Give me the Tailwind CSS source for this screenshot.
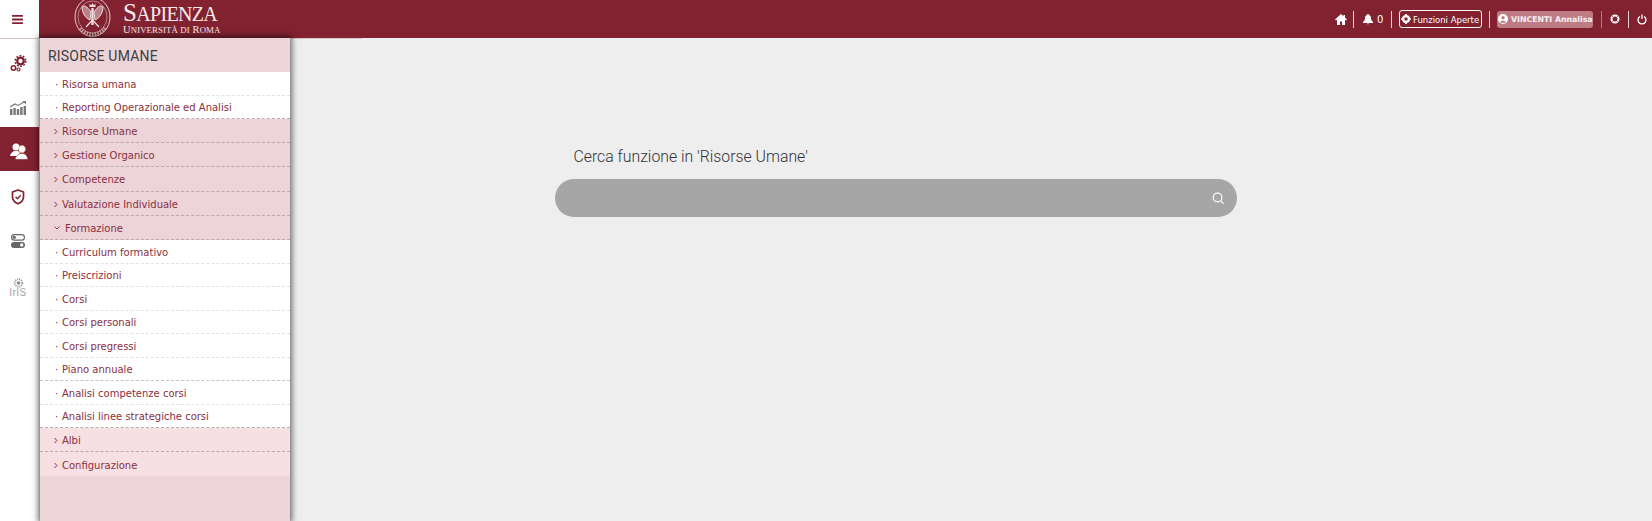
<!DOCTYPE html>
<html><head><meta charset="utf-8"><script src="https://cdn.jsdelivr.net/npm/@tailwindcss/browser@4"></script></head>
<body class="m-0 h-[521px] w-[1652px] overflow-hidden bg-[#eeeeee] font-['DejaVu_Sans',sans-serif]">
<header class="flex h-[38px] w-full bg-[#822231] text-white">
  <div class="flex h-[38px] w-[39px] items-center justify-center bg-white pr-[4px]">
    <svg width="11" height="9" viewBox="0 0 11 9" fill="#822231"><rect y="0" width="11" height="1.800" rx="0.500"/><rect y="3.600" width="11" height="1.800" rx="0.500"/><rect y="7.200" width="11" height="1.800" rx="0.500"/></svg>
  </div>
  <div class="ml-[35px] flex h-[38px] items-start">
    <svg class="mt-[-4px] shrink-0" width="37" height="42" viewBox="0 0 37 42" fill="none" stroke="#f1dfe1"><ellipse cx="18.500" cy="21" rx="17.500" ry="19.500" stroke-width="0.900"/><ellipse cx="18.500" cy="21" rx="14.500" ry="16" stroke-width="0.500"/><path d="M31 32a16 17 0 0 1-25 0" stroke-width="3.500" stroke-dasharray="1.500 1.200" opacity="0.700"/><path d="M18.500 12v17" stroke-width="2.400"/><path d="M17 16C13 10 10 9 8 11c0 5 3 11 8 13zM20 16c4-6 7-7 9-5 0 5-3 11-8 13z" fill="#f1dfe1" fill-opacity="0.500" stroke-width="1"/><path d="M12 31l6.500-7 6.500 7" stroke-width="1.200"/><path d="M15.500 7.500l1.500 2 1.500-2.500 1.500 2.500 1.500-2v3.500h-6z" fill="#f1dfe1" stroke="none"/></svg>
    <div class="mt-[2px] ml-[12px] flex flex-col font-['Liberation_Serif',serif] text-[#f6eaec]">
      <div class="h-[22px] whitespace-nowrap text-[25px] leading-[22px] tracking-[-0.600px]">S<span class="text-[20px] tracking-[-0.700px]">APIENZA</span></div>
      <div class="whitespace-nowrap text-[10.500px] leading-[11px] tracking-[0.100px]">U<span class="text-[8.800px]">NIVERSITÀ DI</span> R<span class="text-[8.800px]">OMA</span></div>
    </div>
  </div>
  <div class="ml-auto flex h-[38px] items-center pr-[5px] text-[9px] font-bold">
    <svg class="shrink-0" width="12" height="11" viewBox="0 0 12 11" fill="white"><path d="M6 0 0 5.500l1 1L2 5.600V11h3V7.500h2V11h3V5.600l1 .9 1-1L10 3.600V1H8.500v1.200z"/></svg>
    <span class="ml-[6px] h-[17px] w-px bg-white/80"></span>
    <svg class="ml-[9px] shrink-0" width="10" height="11" viewBox="0 0 10 11" fill="white"><path d="M5 0a1 1 0 0 0-1 1C2.500 1.500 2 2.800 2 4c0 2-1 3-2 4v1h10V8C9 7 8 6 8 4c0-1.200-.5-2.500-2-3a1 1 0 0 0-1-1zM3.800 9.600a1.300 1.300 0 0 0 2.400 0z"/></svg>
    <span class="ml-[4px] w-[9px] text-[10px] font-normal">0</span>
    <span class="ml-[5px] h-[17px] w-px bg-white/80"></span>
    <div class="ml-[7px] flex h-[18px] w-[83px] shrink-0 items-center rounded-[3px] border border-white whitespace-nowrap">
      <svg class="ml-[1px] shrink-0" width="10" height="10" viewBox="0 0 12 12" fill="white"><circle cx="6" cy="6" r="3.500" fill="none" stroke="white" stroke-width="2.800"/><path d="M5 0h2v2H5zM5 10h2v2H5zM0 5h2v2H0zM10 5h2v2h-2z"/></svg>
      <span class="ml-[2px] pt-[2px] text-[8.500px] font-normal">Funzioni Aperte</span>
    </div>
    <span class="ml-[7px] h-[17px] w-px bg-white/80"></span>
    <div class="ml-[7px] flex h-[17px] w-[96px] shrink-0 items-center rounded-[3px] bg-[#bd7c84] whitespace-nowrap">
      <svg class="ml-[1px] shrink-0" width="10" height="10" viewBox="0 0 12 12"><circle cx="6" cy="6" r="6" fill="white"/><circle cx="6" cy="4.500" r="2" fill="#bd7c84"/><path d="M2.500 9.500C3.500 7.500 8.500 7.500 9.500 9.500 8 11 4 11 2.500 9.500z" fill="#bd7c84"/></svg>
      <span class="ml-[3px] pt-[1px] text-[7.800px] text-white/90">VINCENTI Annalisa</span>
    </div>
    <span class="ml-[8px] h-[17px] w-px bg-white/40"></span>
    <svg class="ml-[8px] shrink-0" width="10" height="10" viewBox="0 0 10 10" fill="none" stroke="white"><circle cx="5" cy="5" r="3.500" stroke-width="2"/><path d="M2 2l6 6M8 2 2 8" stroke="#822231" stroke-width="0.600"/></svg>
    <span class="ml-[8px] h-[17px] w-px bg-white/80"></span>
    <svg class="ml-[8px] shrink-0" width="10" height="11" viewBox="0 0 10 11" fill="none" stroke="white" stroke-width="1.300"><path d="M3 2.500a4 4 0 1 0 4 0M5 .5v4.500"/></svg>
  </div>
</header>
<div class="relative -mb-[1px] h-[1px] w-[362px] bg-[#d9c4c7]"></div>
<div class="flex h-[483px]">
  <nav class="flex w-[39px] shrink-0 flex-col bg-white pt-[1px]">
    <div class="flex h-[44.500px] items-center justify-center pt-[4px] pr-[3px]">
      <svg width="17" height="17" viewBox="0 0 17 17" fill="none" stroke="#822231"><circle cx="10.500" cy="6" r="3.300" stroke-width="2.300"/><circle cx="10.500" cy="6" r="5.300" stroke-width="1.500" stroke-dasharray="1.800 1.530"/><circle cx="3.500" cy="13" r="2.200" stroke-width="1.500"/><circle cx="8.500" cy="14.500" r="1.500" stroke-width="1.200"/></svg>
    </div>
    <div class="flex h-[43px] items-center justify-center pt-[5px] pr-[3px]">
      <svg width="16" height="14" viewBox="0 0 16 14" fill="#777"><rect x="0" y="8" width="2.400" height="6"/><rect x="3.400" y="7" width="2.400" height="7"/><rect x="6.800" y="8" width="2.400" height="6"/><rect x="10.200" y="6" width="2.400" height="8"/><rect x="13.600" y="5" width="2.400" height="9"/><path d="M0 6 5 3l3 1.500L14 1" fill="none" stroke="#777" stroke-width="1.100"/><path d="M12.500 0H16v3.500z"/></svg>
    </div>
    <div class="flex h-[44px] items-center justify-center bg-[#822231] pt-[5px] pr-[2px]">
      <svg width="18" height="17" viewBox="0 0 18 17" fill="white"><circle cx="6" cy="4" r="3.500"/><path d="M0 13c0-2 2-4 4-5h4c1 .7 2 1.500 2.500 3L8 13z"/><path d="M12 2.500c2.200 0 3.400 1.700 3.400 3.500S14.200 9.800 12 9.800 8.600 8 8.600 6 9.800 2.500 12 2.500z" stroke="#d69a6a" stroke-width="0.800"/><path d="M5 16.500c.5-3.500 3.500-5 5-6h4c1.500 1 3.500 2.500 4 6z" stroke="#822231" stroke-width="0.600"/></svg>
    </div>
    <div class="flex h-[45px] items-center justify-center pt-[7px] pr-[3px]">
      <svg width="14" height="16" viewBox="0 0 14 16" fill="none" stroke="#822231" stroke-width="1.700"><path d="M7 1l5.500 2v5c0 3-2.500 5.500-5.500 6.800C4 13.500 1.500 11 1.500 8V3z" stroke-linejoin="round"/><path d="M4.500 7.800l2 2 3.200-3.600" stroke-width="1.300"/></svg>
    </div>
    <div class="flex h-[44.500px] items-center justify-center pt-[7px] pr-[3px]">
      <svg width="14" height="14" viewBox="0 0 14 14" fill="none"><rect x="0.600" y="0.600" width="12.800" height="5.500" rx="2.700" stroke="#666" stroke-width="1.100"/><circle cx="3.300" cy="3.350" r="1.600" fill="#666"/><rect x="0" y="8" width="14" height="6" rx="3" fill="#666"/><circle cx="10.700" cy="11" r="1.700" fill="white"/></svg>
    </div>
    <div class="flex h-[45px] flex-col items-center justify-center pt-[10px] pr-[3px] text-[10px] leading-[9px] text-[#a3a3a3]">
      <svg class="shrink-0" width="11" height="10" viewBox="0 0 11 10" fill="none" stroke="#8d8d8d"><circle cx="5.500" cy="5" r="1.800" fill="#8d8d8d" stroke="none"/><circle cx="5.500" cy="5" r="3.800" stroke-width="1.800" stroke-dasharray="1 1"/></svg>
      <span class="font-['Liberation_Sans',sans-serif] tracking-[0.500px]">IrIS</span>
    </div>
  </nav>
  <aside class="relative z-10 ml-[1px] flex w-[250px] shrink-0 flex-col bg-[#ecd4d8] text-[10px] text-[#8b2f3e] shadow-[0_0_6px_2px_rgba(0,0,0,0.55)]">
    <div class="flex h-[34px] items-center pt-[3px] pl-[8px] font-['Roboto',sans-serif] text-[14px] tracking-[0.200px] text-[#3d3d3d]">RISORSE UMANE</div>
    <a class="flex h-[23.500px] items-center border-b border-dashed border-[#e2e2e2] bg-white pt-[2px]"><span class="w-[22px] pl-[15px]">·</span>Risorsa umana</a>
    <a class="flex h-[23.700px] items-center border-b border-dashed border-[#b9aaac] bg-white pt-[2px]"><span class="w-[22px] pl-[15px]">·</span>Reporting Operazionale ed Analisi</a>
    <a class="flex h-[24px] items-center border-b border-dashed border-[#b9aaac] pt-[2px]"><span class="flex w-[22px] pl-[14px]"><svg width="4" height="7" viewBox="0 0 4 7" fill="none" stroke="#8b2f3e"><path d="M.5 1 3 3.500.5 6"/></svg></span>Risorse Umane</a>
    <a class="flex h-[24px] items-center border-b border-dashed border-[#b9aaac] pt-[2px]"><span class="flex w-[22px] pl-[14px]"><svg width="4" height="7" viewBox="0 0 4 7" fill="none" stroke="#8b2f3e"><path d="M.5 1 3 3.500.5 6"/></svg></span>Gestione Organico</a>
    <a class="flex h-[24.500px] items-center border-b border-dashed border-[#b9aaac] pt-[2px]"><span class="flex w-[22px] pl-[14px]"><svg width="4" height="7" viewBox="0 0 4 7" fill="none" stroke="#8b2f3e"><path d="M.5 1 3 3.500.5 6"/></svg></span>Competenze</a>
    <a class="flex h-[24px] items-center border-b border-dashed border-[#b9aaac] pt-[2px]"><span class="flex w-[22px] pl-[14px]"><svg width="4" height="7" viewBox="0 0 4 7" fill="none" stroke="#8b2f3e"><path d="M.5 1 3 3.500.5 6"/></svg></span>Valutazione Individuale</a>
    <a class="flex h-[24.500px] items-center border-b border-dashed border-[#b9aaac] pt-[2px]"><span class="flex w-[25px] pl-[14px]"><svg width="6" height="4" viewBox="0 0 6 4" fill="none" stroke="#8b2f3e" stroke-width="0.900"><path d="M.5.500 3 3 5.500.500"/></svg></span>Formazione</a>
    <a class="flex h-[23.500px] items-center border-b border-dashed border-[#e2e2e2] bg-white pt-[2px]"><span class="w-[22px] pl-[15px]">·</span>Curriculum formativo</a>
    <a class="flex h-[23.500px] items-center border-b border-dashed border-[#e2e2e2] bg-white pt-[2px]"><span class="w-[22px] pl-[15px]">·</span>Preiscrizioni</a>
    <a class="flex h-[23.500px] items-center border-b border-dashed border-[#e2e2e2] bg-white pt-[2px]"><span class="w-[22px] pl-[15px]">·</span>Corsi</a>
    <a class="flex h-[23.500px] items-center border-b border-dashed border-[#e2e2e2] bg-white pt-[2px]"><span class="w-[22px] pl-[15px]">·</span>Corsi personali</a>
    <a class="flex h-[23.500px] items-center border-b border-dashed border-[#e2e2e2] bg-white pt-[2px]"><span class="w-[22px] pl-[15px]">·</span>Corsi pregressi</a>
    <a class="flex h-[23.500px] items-center border-b border-dashed border-[#c5c5c5] bg-white pt-[2px]"><span class="w-[22px] pl-[15px]">·</span>Piano annuale</a>
    <a class="flex h-[23.500px] items-center border-b border-dashed border-[#e2e2e2] bg-white pt-[2px]"><span class="w-[22px] pl-[15px]">·</span>Analisi competenze corsi</a>
    <a class="flex h-[23.500px] items-center border-b border-dashed border-[#b9aaac] bg-white pt-[2px]"><span class="w-[22px] pl-[15px]">·</span>Analisi linee strategiche corsi</a>
    <a class="flex h-[24px] items-center border-b border-dashed border-[#b9aaac] bg-[#f6e0e3] pt-[2px]"><span class="flex w-[22px] pl-[14px]"><svg width="4" height="7" viewBox="0 0 4 7" fill="none" stroke="#8b2f3e"><path d="M.5 1 3 3.500.5 6"/></svg></span>Albi</a>
    <a class="flex h-[23.700px] items-center bg-[#f6e0e3] pt-[2px]"><span class="flex w-[22px] pl-[14px]"><svg width="4" height="7" viewBox="0 0 4 7" fill="none" stroke="#8b2f3e"><path d="M.5 1 3 3.500.5 6"/></svg></span>Configurazione</a>
  </aside>
  <main class="ml-[265px] flex w-[682px] flex-col pt-[109px]">
    <div class="h-[32px] pl-[18.500px] font-['Roboto',sans-serif] text-[15.800px] leading-[20px] font-light text-[#333]">Cerca funzione in 'Risorse Umane'</div>
    <div class="flex h-[38px] items-center justify-end rounded-[19px] bg-[#a6a6a6] pr-[12px]">
      <svg width="13" height="13" viewBox="0 0 14 14" fill="none" stroke="white" stroke-width="1.300"><circle cx="6" cy="6" r="4.700"/><path d="M9.500 9.500 12.500 12.500"/></svg>
    </div>
  </main>
</div>
</body></html>
